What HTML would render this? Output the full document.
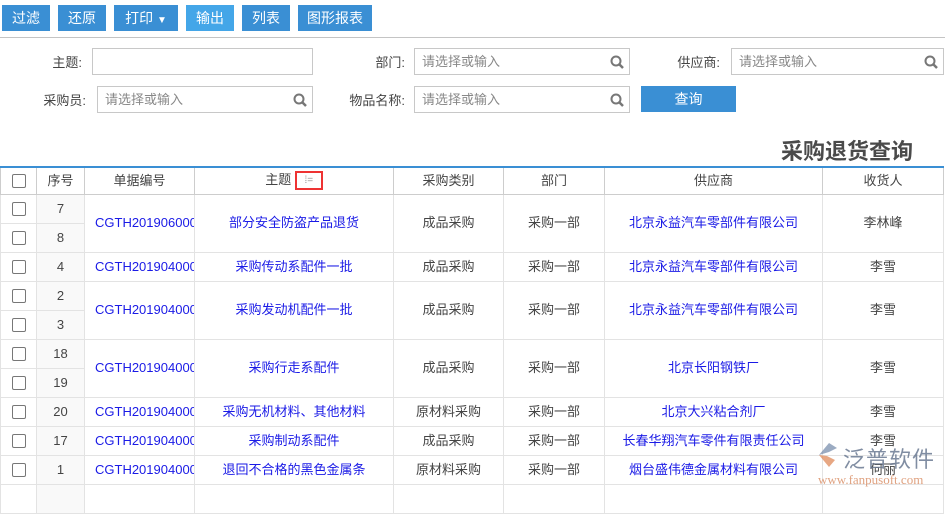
<!DOCTYPE html>
<html><head><meta charset="utf-8"><style>
*{margin:0;padding:0;box-sizing:border-box}
body{width:945px;height:489px;overflow:hidden;background:#fff;font-family:"Liberation Sans","Noto Sans CJK SC",sans-serif;font-size:13px;color:#444;position:relative}
.btn{position:absolute;top:5px;height:26px;background:#3a8fd4;color:#fff;font-size:14px;line-height:26px;text-align:center}
.lbl{position:absolute;font-size:13px;color:#444;text-align:right}
.inp{position:absolute;height:27px;border:1px solid #c8c8c8;background:#fff;color:#888;font-size:13px;line-height:25px;padding-left:7px}
.inp svg{position:absolute;right:4px;top:5px}
table{position:absolute;left:0;top:166px;border-collapse:collapse;table-layout:fixed;width:943px;border-top:2px solid #3a8fd4}
td,th{border:1px solid #e3e3e3;text-align:center;font-weight:normal;height:29px;font-size:13px;color:#444;white-space:nowrap;overflow:hidden;padding:0;line-height:16px}
tr{height:29px}
tr.h{height:27px}
th{border-color:#cdcdcd;height:27px}
td.b{color:#1a1ae6}
td.n{background:#f9f9f9}
td.code{text-align:left;padding-left:10px;color:#1a1ae6;text-overflow:clip}
.cb{display:inline-block;width:14px;height:14px;border:1px solid #777;border-radius:2px;vertical-align:middle;background:#fff}
</style></head><body>
<div class="btn" style="left:2px;width:48px">过滤</div>
<div class="btn" style="left:58px;width:48px">还原</div>
<div class="btn" style="left:114px;width:64px">打印 <span style="font-size:10px">▼</span></div>
<div class="btn" style="left:186px;width:48px;background:#44a6e8">输出</div>
<div class="btn" style="left:242px;width:48px">列表</div>
<div class="btn" style="left:298px;width:74px">图形报表</div>
<div style="position:absolute;left:0;top:37px;width:945px;height:1px;background:#c4c4c4"></div>

<div class="lbl" style="left:20px;top:52px;width:62px">主题:</div>
<div class="inp" style="left:92px;top:48px;width:221px"></div>
<div class="lbl" style="left:340px;top:52px;width:65px">部门:</div>
<div class="inp" style="left:414px;top:48px;width:216px">请选择或输入<svg width="16" height="16"><circle cx="7" cy="7" r="4.5" fill="none" stroke="#777" stroke-width="2"/><line x1="10.5" y1="10.5" x2="14" y2="14" stroke="#777" stroke-width="2.5"/></svg></div>
<div class="lbl" style="left:660px;top:52px;width:60px">供应商:</div>
<div class="inp" style="left:731px;top:48px;width:213px">请选择或输入<svg width="16" height="16"><circle cx="7" cy="7" r="4.5" fill="none" stroke="#777" stroke-width="2"/><line x1="10.5" y1="10.5" x2="14" y2="14" stroke="#777" stroke-width="2.5"/></svg></div>

<div class="lbl" style="left:20px;top:90px;width:66px">采购员:</div>
<div class="inp" style="left:97px;top:86px;width:216px">请选择或输入<svg width="16" height="16"><circle cx="7" cy="7" r="4.5" fill="none" stroke="#777" stroke-width="2"/><line x1="10.5" y1="10.5" x2="14" y2="14" stroke="#777" stroke-width="2.5"/></svg></div>
<div class="lbl" style="left:320px;top:90px;width:85px">物品名称:</div>
<div class="inp" style="left:414px;top:86px;width:216px">请选择或输入<svg width="16" height="16"><circle cx="7" cy="7" r="4.5" fill="none" stroke="#777" stroke-width="2"/><line x1="10.5" y1="10.5" x2="14" y2="14" stroke="#777" stroke-width="2.5"/></svg></div>
<div class="btn" style="left:641px;top:86px;width:95px">查询</div>

<div style="position:absolute;left:781px;top:134px;font-size:22px;font-weight:bold;color:#4a4a4a">采购退货查询</div>

<table>
<colgroup><col style="width:36px"><col style="width:48px"><col style="width:110px"><col style="width:199px"><col style="width:110px"><col style="width:101px"><col style="width:218px"><col style="width:121px"></colgroup>
<tr class="h"><th><span class="cb"></span></th><th>序号</th><th>单据编号</th><th>主题 <span style="display:inline-block;width:28px;height:19px;border:2px solid #e33;vertical-align:middle;font-size:10px;color:#999;line-height:15px">⁞=</span></th><th>采购类别</th><th>部门</th><th>供应商</th><th>收货人</th></tr>
<tr><td><span class="cb"></span></td><td class="n">7</td><td class="code" rowspan="2">CGTH201906000</td><td class="b" rowspan="2">部分安全防盗产品退货</td><td rowspan="2">成品采购</td><td rowspan="2">采购一部</td><td class="b" rowspan="2">北京永益汽车零部件有限公司</td><td rowspan="2">李林峰</td></tr>
<tr><td><span class="cb"></span></td><td class="n">8</td></tr>
<tr><td><span class="cb"></span></td><td class="n">4</td><td class="code">CGTH201904000</td><td class="b">采购传动系配件一批</td><td>成品采购</td><td>采购一部</td><td class="b">北京永益汽车零部件有限公司</td><td>李雪</td></tr>
<tr><td><span class="cb"></span></td><td class="n">2</td><td class="code" rowspan="2">CGTH201904000</td><td class="b" rowspan="2">采购发动机配件一批</td><td rowspan="2">成品采购</td><td rowspan="2">采购一部</td><td class="b" rowspan="2">北京永益汽车零部件有限公司</td><td rowspan="2">李雪</td></tr>
<tr><td><span class="cb"></span></td><td class="n">3</td></tr>
<tr><td><span class="cb"></span></td><td class="n">18</td><td class="code" rowspan="2">CGTH201904000</td><td class="b" rowspan="2">采购行走系配件</td><td rowspan="2">成品采购</td><td rowspan="2">采购一部</td><td class="b" rowspan="2">北京长阳钢铁厂</td><td rowspan="2">李雪</td></tr>
<tr><td><span class="cb"></span></td><td class="n">19</td></tr>
<tr><td><span class="cb"></span></td><td class="n">20</td><td class="code">CGTH201904000</td><td class="b">采购无机材料、其他材料</td><td>原材料采购</td><td>采购一部</td><td class="b">北京大兴粘合剂厂</td><td>李雪</td></tr>
<tr><td><span class="cb"></span></td><td class="n">17</td><td class="code">CGTH201904000</td><td class="b">采购制动系配件</td><td>成品采购</td><td>采购一部</td><td class="b">长春华翔汽车零件有限责任公司</td><td>李雪</td></tr>
<tr><td><span class="cb"></span></td><td class="n">1</td><td class="code">CGTH201904000</td><td class="b">退回不合格的黑色金属条</td><td>原材料采购</td><td>采购一部</td><td class="b">烟台盛伟德金属材料有限公司</td><td>何丽</td></tr>
<tr><td></td><td class="n"></td><td></td><td></td><td></td><td></td><td></td><td></td></tr>
</table>

<div style="position:absolute;left:815px;top:440px;width:26px;height:30px;opacity:.75">
<svg width="26" height="30"><path d="M4 15 L14 3 L22 8 L14 12 Z" fill="#7a8fae"/><path d="M4 15 L14 27 L20 20 L12 16 Z" fill="#e08a5a"/></svg></div>
<div style="position:absolute;left:843px;top:442px;font-size:22px;color:#6b7a92;opacity:.85;letter-spacing:1px">泛普软件</div>
<div style="position:absolute;left:818px;top:472px;font-size:13px;color:#d88a60;opacity:.8;font-family:'Liberation Serif',serif">www.fanpusoft.com</div>
</body></html>
